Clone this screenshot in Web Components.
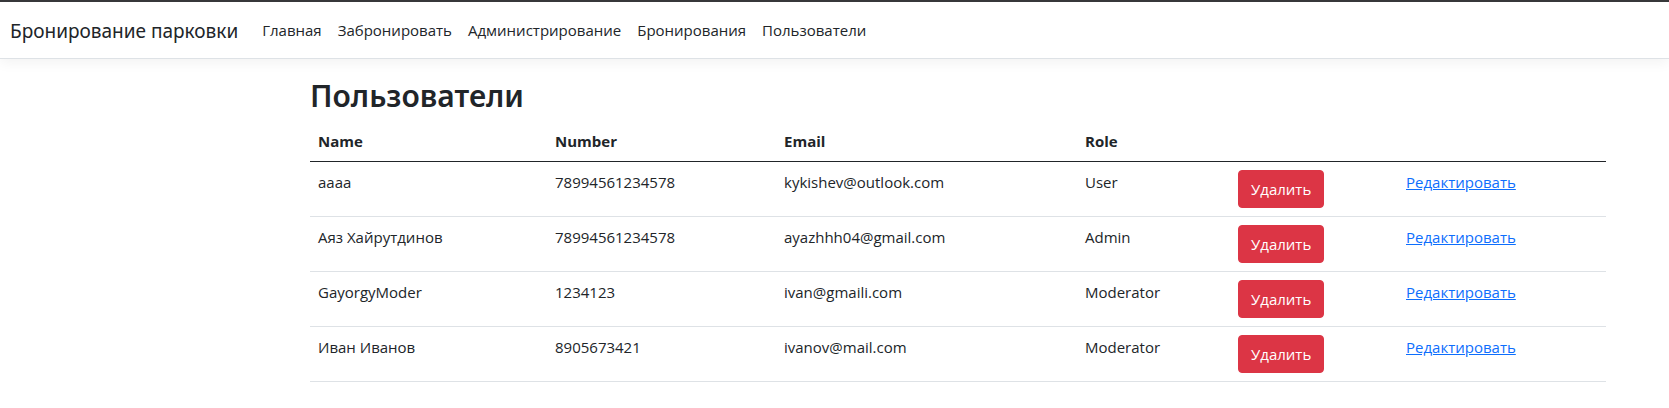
<!DOCTYPE html>
<html lang="ru">
<head>
<meta charset="utf-8">
<title>Пользователи</title>
<style>
body { margin: 0; background: #fff; color: #212529; font: 15px/24px "Open Sans", "Noto Sans", sans-serif; }
</style>
</head>
<body>
<parking-nav>
  <nav-item href="#home">Главная</nav-item>
  <nav-item href="#book">Забронировать</nav-item>
  <nav-item href="#admin">Администрирование</nav-item>
  <nav-item href="#bookings">Бронирования</nav-item>
  <nav-item href="#users">Пользователи</nav-item>
</parking-nav>
<page-container>
  <h1 slot="title">Пользователи</h1>
  <user-table></user-table>
</page-container>
<script>
const define = (name, html, init) => customElements.define(name, class extends HTMLElement {
  connectedCallback() {
    if (this.shadowRoot) return;
    this.attachShadow({ mode: 'open' }).innerHTML = html;
    if (init) init(this);
  }
});

define('nav-item', `
<style>
:host { display: block; }
a { display: block; padding: 8px; color: #212529; text-decoration: none; }
</style>
<a><slot></slot></a>`, el => { el.shadowRoot.querySelector('a').href = el.getAttribute('href'); });

define('parking-nav', `
<style>
:host { display: block; }
nav { display: flex; align-items: center; padding: 8px 10px; border-top: 2px solid #37383a; border-bottom: 1px solid #dee2e6; box-shadow: 0 4px 12px rgba(0,0,0,.05); }
.brand { color: #212529; text-decoration: none; font-family: "Noto Sans", sans-serif; font-size: 19px; line-height: 30px; padding-top: 2px; margin-right: 16px; white-space: nowrap; }
</style>
<nav><a class="brand" href="#">Бронирование парковки</a><slot></slot></nav>`);

define('page-container', `
<style>
:host { display: grid; grid-template-columns: minmax(12px, 310fr) minmax(0, 1296px) minmax(12px, 63fr); margin-top: 16px; }
main { grid-column: 2; }
::slotted(h1) { margin: 0 0 6px; padding-top: 2px; font-family: "Noto Sans", sans-serif; font-size: 30px; line-height: 38px; font-weight: 600; }
</style>
<main><slot name="title"></slot><slot></slot></main>`);

define('delete-button', `
<style>
:host { display: block; }
button { display: block; margin: 0; padding: 6px 12px; border: 1px solid #dc3545; border-radius: 4px; background: #dc3545; color: #fff; font: inherit; cursor: pointer; }
</style>
<button type="button"><slot></slot></button>`);

const users = [
  ['аааа', '78994561234578', 'kykishev@outlook.com', 'User'],
  ['Аяз Хайрутдинов', '78994561234578', 'ayazhhh04@gmail.com', 'Admin'],
  ['GayorgyModer', '1234123', 'ivan@gmaili.com', 'Moderator'],
  ['Иван Иванов', '8905673421', 'ivanov@mail.com', 'Moderator'],
];

define('user-table', `
<style>
:host { display: block; }
table { width: 100%; table-layout: fixed; border-collapse: separate; border-spacing: 0; font: inherit; }
th, td { padding: 8px; border-bottom: 1px solid #dee2e6; text-align: left; vertical-align: top; }
th { font-weight: 700; border-color: #212529; }
td a { color: #0d6efd; }
.name { width: 221px; }
.number { width: 213px; }
.email { width: 285px; }
.role { width: 137px; }
.delete { width: 152px; }
.edit { width: 192px; }
</style>
<table>
<thead><tr><th class="name">Name</th><th class="number">Number</th><th class="email">Email</th><th class="role">Role</th><th class="delete"></th><th class="edit"></th></tr></thead>
<tbody>${users.map(u => `<tr>${u.map(v => `<td>${v}</td>`).join('')}<td><delete-button>Удалить</delete-button></td><td><a href="#edit">Редактировать</a></td></tr>`).join('')}</tbody>
</table>`);
</script>
</body>
</html>
